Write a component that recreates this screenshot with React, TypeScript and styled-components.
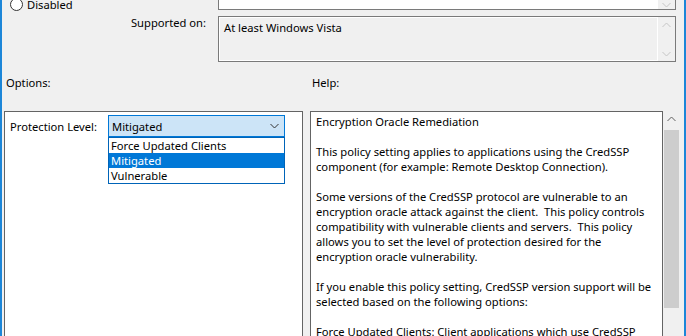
import styled, { createGlobalStyle } from 'styled-components';

const GlobalStyle = createGlobalStyle`
  html, body {
    margin: 0;
    padding: 0;
    background: #f0f0f0;
  }
  body {
    font-family: "Noto Sans", "DejaVu Sans", sans-serif;
    font-size: 11.2px;
    color: #000;
  }
`;

const helpLines = [
  'Encryption Oracle Remediation',
  '',
  'This policy setting applies to applications using the CredSSP',
  'component (for example: Remote Desktop Connection).',
  '',
  'Some versions of the CredSSP protocol are vulnerable to an',
  'encryption oracle attack against the client.  This policy controls',
  'compatibility with vulnerable clients and servers.  This policy',
  'allows you to set the level of protection desired for the',
  'encryption oracle vulnerability.',
  '',
  'If you enable this policy setting, CredSSP version support will be',
  'selected based on the following options:',
  '',
  'Force Updated Clients: Client applications which use CredSSP',
];

const levels = ['Force Updated Clients', 'Mitigated', 'Vulnerable'];

const Window = styled.div`
  width: 686px;
  height: 336px;
  box-sizing: border-box;
  border-left: 2px solid #1c86d8;
  border-right: 2px solid #1c86d8;
  overflow: hidden;
  background: #f0f0f0;
  line-height: 15px;
`;

const TopArea = styled.div`
  display: grid;
  grid-template-columns: 216px 458px;
  grid-template-rows: 41px 46px;
  row-gap: 6px;
  margin-top: -31px;
`;

const RadioRow = styled.label`
  align-self: end;
  margin-bottom: -2px;
  padding-left: 8px;
  display: flex;
  align-items: center;
  gap: 4px;
`;

const RadioCircle = styled.span`
  width: 11px;
  height: 11px;
  border: 1px solid #333;
  border-radius: 50%;
  background: #fff;
`;

const Field = styled.div<{ $disabled?: boolean }>`
  display: flex;
  border: 1px solid #7a7a7a;
  background: ${(p) => (p.$disabled ? '#f0f0f0' : '#fff')};
  box-shadow: ${(p) => (p.$disabled ? 'inset 1px 1px 0 #fff, inset -1px -1px 0 #fff' : 'none')};
`;

const FieldText = styled.div`
  flex: 1;
  padding: 3px 0 0 5px;
`;

const MiniScroll = styled.div`
  width: 17px;
  display: flex;
  flex-direction: column;
  justify-content: space-between;
  align-items: center;
  border-left: 1px solid #fff;
  background: #f0f0f0;
  padding: 5px 0 4px;
`;

const TopScroll = styled(MiniScroll)`
  justify-content: flex-end;
  padding: 0 0 1px;
`;

const FieldLabel = styled.div`
  justify-self: end;
  padding-right: 12px;
  margin-top: -1px;
`;

const SectionLabels = styled.div`
  display: grid;
  grid-template-columns: 306px 1fr;
  margin-top: 13px;
  padding-left: 4px;
`;

const Panels = styled.div`
  display: flex;
  gap: 7px;
  margin-top: 21px;
  padding-left: 2px;
`;

const OptionsPanel = styled.div`
  width: 299px;
  height: 240px;
  box-sizing: border-box;
  border: 1px solid #646464;
  background: #fff;
  padding: 3px 0 0 5px;
`;

const OptionRow = styled.div`
  display: grid;
  grid-template-columns: 98px 177px;
  align-items: center;
`;

const ComboWrap = styled.div`
  position: relative;
`;

const Combo = styled.div`
  height: 22px;
  box-sizing: border-box;
  border: 1px solid #0078d7;
  background: #cce4f7;
  display: flex;
  align-items: center;
  justify-content: space-between;
  padding: 0 5px 0 3px;
`;

const DropList = styled.ul`
  position: absolute;
  top: 22px;
  left: 0;
  right: 0;
  margin: 0;
  padding: 0;
  list-style: none;
  border: 1px solid #0064b8;
  background: #fff;
`;

const DropItem = styled.li<{ $selected?: boolean }>`
  height: 15px;
  line-height: 15px;
  padding-left: 2px;
  background: ${(p) => (p.$selected ? '#0078d7' : '#fff')};
  color: ${(p) => (p.$selected ? '#fff' : '#000')};
`;

const HelpFrame = styled.div`
  display: flex;
  height: 240px;
`;

const HelpBox = styled.div`
  width: 353px;
  box-sizing: border-box;
  border: 1px solid #646464;
  background: #fff;
  padding: 2px 0 0 5px;
`;

const HelpLine = styled.div`
  height: 15px;
  white-space: pre;
`;

const ScrollBar = styled.div`
  width: 17px;
  display: flex;
  flex-direction: column;
  align-items: center;
  background: #f0f0f0;
  padding-top: 5px;
`;

const Thumb = styled.div`
  width: 15px;
  height: 178px;
  margin-top: 8px;
  background: #cdcdcd;
`;

function Chevron({ up, color }: { up?: boolean; color: string }) {
  return (
    <svg width="9" height="6" viewBox="0 0 9 6">
      <path
        d={up ? 'M0.5 5L4.5 1L8.5 5' : 'M0.5 1L4.5 5L8.5 1'}
        fill="none"
        stroke={color}
        strokeWidth="1"
      />
    </svg>
  );
}

export default function App() {
  return (
    <>
      <GlobalStyle />
      <Window>
        <TopArea>
          <RadioRow>
            <RadioCircle />
            Disabled
          </RadioRow>
          <Field>
            <FieldText />
            <TopScroll>
              <Chevron color="#c5c5c5" />
            </TopScroll>
          </Field>
          <FieldLabel>Supported on:</FieldLabel>
          <Field $disabled>
            <FieldText>At least Windows Vista</FieldText>
            <MiniScroll>
              <Chevron up color="#c5c5c5" />
              <Chevron color="#c5c5c5" />
            </MiniScroll>
          </Field>
        </TopArea>

        <SectionLabels>
          <span>Options:</span>
          <span>Help:</span>
        </SectionLabels>

        <Panels>
          <OptionsPanel>
            <OptionRow>
              <span>Protection Level:</span>
              <ComboWrap>
                <Combo>
                  <span>Mitigated</span>
                  <Chevron color="#333" />
                </Combo>
                <DropList>
                  {levels.map((l) => (
                    <DropItem key={l} $selected={l === 'Mitigated'}>
                      {l}
                    </DropItem>
                  ))}
                </DropList>
              </ComboWrap>
            </OptionRow>
          </OptionsPanel>
          <HelpFrame>
            <HelpBox>
              {helpLines.map((line, i) => (
                <HelpLine key={i}>{line}</HelpLine>
              ))}
            </HelpBox>
            <ScrollBar>
              <Chevron up color="#606060" />
              <Thumb />
            </ScrollBar>
          </HelpFrame>
        </Panels>
      </Window>
    </>
  );
}
